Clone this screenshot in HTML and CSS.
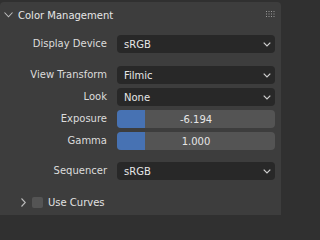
FILE: index.html
```html
<!DOCTYPE html>
<html>
<head>
<meta charset="utf-8">
<link rel="stylesheet" href="styles.css">
</head>
<body>
<div class="panel">
  <div class="header">
    <svg class="hchev" width="9" height="6" viewBox="0 0 9 6"><path d="M0.5 0.5 L4.5 4.8 L8.5 0.5" fill="none" stroke="#bdbdbd" stroke-width="1.1"/></svg>
    <span class="title">Color Management</span>
    <svg class="grip" width="9" height="7" viewBox="0 0 9 7">
      <g fill="#9a9a9a">
        <rect x="0" y="0" width="1" height="1"/><rect x="2.5" y="0" width="1" height="1"/><rect x="5" y="0" width="1" height="1"/><rect x="7.5" y="0" width="1" height="1"/>
        <rect x="0" y="2.5" width="1" height="1"/><rect x="2.5" y="2.5" width="1" height="1"/><rect x="5" y="2.5" width="1" height="1"/><rect x="7.5" y="2.5" width="1" height="1"/>
        <rect x="0" y="5" width="1" height="1"/><rect x="2.5" y="5" width="1" height="1"/><rect x="5" y="5" width="1" height="1"/><rect x="7.5" y="5" width="1" height="1"/>
      </g>
    </svg>
  </div>
  <div class="body">
    <div class="group">
      <div class="label">Display Device</div>
      <div class="dropdown"><span>sRGB</span><svg class="dchev" width="8" height="5" viewBox="0 0 8 5"><path d="M0.7 0.7 L4 4 L7.3 0.7" fill="none" stroke="#d0d0d0" stroke-width="1.2"/></svg></div>
    </div>
    <div class="group">
      <div class="label">View Transform</div>
      <div class="dropdown"><span>Filmic</span><svg class="dchev" width="8" height="5" viewBox="0 0 8 5"><path d="M0.7 0.7 L4 4 L7.3 0.7" fill="none" stroke="#d0d0d0" stroke-width="1.2"/></svg></div>
      <div class="label">Look</div>
      <div class="dropdown"><span>None</span><svg class="dchev" width="8" height="5" viewBox="0 0 8 5"><path d="M0.7 0.7 L4 4 L7.3 0.7" fill="none" stroke="#d0d0d0" stroke-width="1.2"/></svg></div>
      <div class="label">Exposure</div>
      <div class="slider"><div class="fill" style="width:18%"></div><span>-6.194</span></div>
      <div class="label">Gamma</div>
      <div class="slider"><div class="fill" style="width:18%"></div><span>1.000</span></div>
    </div>
    <div class="group">
      <div class="label">Sequencer</div>
      <div class="dropdown"><span>sRGB</span><svg class="dchev" width="8" height="5" viewBox="0 0 8 5"><path d="M0.7 0.7 L4 4 L7.3 0.7" fill="none" stroke="#d0d0d0" stroke-width="1.2"/></svg></div>
    </div>
    <div class="subpanel">
      <svg class="schev" width="5" height="9" viewBox="0 0 5 9"><path d="M0.5 0.5 L4.3 4.5 L0.5 8.5" fill="none" stroke="#bdbdbd" stroke-width="1.1"/></svg>
      <span class="check"></span>
      <span class="subtitle">Use Curves</span>
    </div>
  </div>
</div>
</body>
</html>
```

FILE: styles.css
```css
html, body {
  margin: 0;
  padding: 0;
  background: #303030;
  width: 286px;
  height: 215px;
  overflow: hidden;
  font-family: "DejaVu Sans", "Liberation Sans", sans-serif;
  font-size: 10px;
  color: #e2e2e2;
}

.panel {
  margin: 2px 5px 0 0;
  height: 240px;
  background: #3d3d3d;
  border-radius: 4px;
}

.header {
  display: flex;
  align-items: center;
  height: 26px;
  padding: 0 6px 0 3px;
}

.hchev {
  margin-left: 1px;
  margin-right: 5px;
}

.title {
  flex: 1;
  font-size: 10px;
  color: #e6e6e6;
}

.grip {
  margin-top: -1px;
}

.body {
  padding: 7px 6px 0 0;
  display: flex;
  flex-direction: column;
}

.group {
  display: grid;
  grid-template-columns: 107px 1fr;
  column-gap: 10px;
  row-gap: 4px;
  margin-bottom: 13px;
}

.group:nth-child(2) {
  margin-bottom: 12px;
}

.label {
  height: 18px;
  line-height: 18px;
  text-align: right;
  color: #dcdcdc;
  white-space: nowrap;
}

.dropdown {
  height: 18px;
  background: #282828;
  border-radius: 4px;
  display: flex;
  align-items: center;
  justify-content: space-between;
  padding: 0 3px 0 7px;
  color: #e6e6e6;
}

.dchev {
  margin-right: 1px;
}

.slider {
  position: relative;
  height: 18px;
  background: #545454;
  border-radius: 4px;
  overflow: hidden;
  display: flex;
  align-items: center;
  justify-content: center;
  color: #e6e6e6;
}

.fill {
  position: absolute;
  left: 0;
  top: 0;
  bottom: 0;
  background: #4772b3;
}

.slider span {
  position: relative;
}

.subpanel {
  display: flex;
  align-items: center;
  height: 18px;
  padding-left: 21px;
}

.schev {
  margin-right: 6px;
}

.check {
  width: 11px;
  height: 11px;
  background: #545454;
  border-radius: 2px;
  margin-right: 5px;
}

.subtitle {
  color: #e2e2e2;
}
```
